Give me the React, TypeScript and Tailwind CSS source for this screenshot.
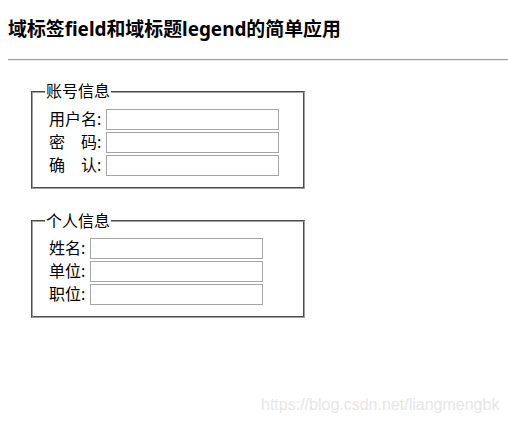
import React from 'react';

const font = { fontFamily: '"Noto Sans", "Noto Sans CJK SC", sans-serif' };

type Field = { label: string; name: string };

const account: Field[] = [
  { label: '用户名:', name: 'username' },
  { label: '密　码:', name: 'password' },
  { label: '确　认:', name: 'confirm' },
];

const personal: Field[] = [
  { label: '姓名:', name: 'realname' },
  { label: '单位:', name: 'company' },
  { label: '职位:', name: 'position' },
];

const FieldGroup = ({
  title,
  fields,
  labelWidth,
  className,
}: {
  title: string;
  fields: Field[];
  labelWidth: string;
  className: string;
}) => (
  <fieldset
    className={`w-[274px] ml-[23px] border-2 border-[#a0a0a0] [border-style:groove] pl-4 pt-[5.6px] pb-[10px] ${className}`}
  >
    <legend className="-ml-1 px-px text-[16px] leading-[21px] text-black">{title}</legend>
    <div className="flex flex-col">
      {fields.map((f) => (
        <div key={f.name} className="flex items-center h-[23px]">
          <label htmlFor={f.name} className={`${labelWidth} text-[16px] leading-[21px] whitespace-nowrap`}>
            {f.label}
          </label>
          <input
            id={f.name}
            type={f.name === 'password' || f.name === 'confirm' ? 'password' : 'text'}
            className="w-[173px] h-[21px] border border-[#a5a5a5] bg-white outline-none"
          />
        </div>
      ))}
    </div>
  </fieldset>
);

export default function App() {
  return (
    <div className="relative w-[508px] h-[423px] bg-white overflow-hidden text-black" style={font}>
      <div className="pl-2">
        <h3 className="mt-[17px] text-[18.9px] leading-[24px] font-bold">
          域标签field和域标题legend的简单应用
        </h3>
        <hr className="mt-[18px] w-[500px] border-t border-b border-t-[#9a9a9a] border-b-[#eeeeee]" />
        <form>
          <FieldGroup title="账号信息" fields={account} labelWidth="w-[57px]" className="mt-[20px]" />
          <FieldGroup title="个人信息" fields={personal} labelWidth="w-[41px]" className="mt-[22px]" />
        </form>
      </div>
      <div
        className="absolute left-[261px] top-[395px] text-[16px] leading-[20px] text-[#e6e6e6]"
        style={{ fontFamily: '"Liberation Sans", Arial, sans-serif' }}
      >
        https://blog.csdn.net/liangmengbk
      </div>
    </div>
  );
}
